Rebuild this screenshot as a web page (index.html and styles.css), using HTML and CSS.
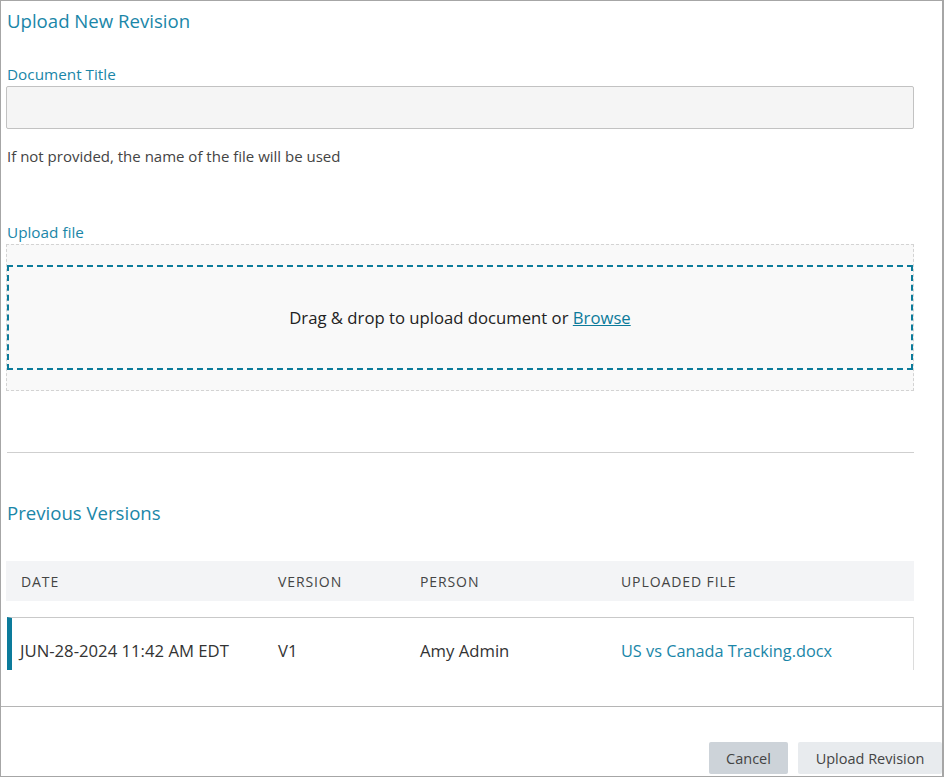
FILE: index.html
```html
<!DOCTYPE html>
<html>
    <head>
        <title>Upload New Revision</title>
        <link rel="stylesheet" href="styles.css">
    </head>
    <body>
        <div class="dialog">
            <div class="content">
                <h2 class="title">Upload New Revision</h2>
                <label class="label" for="doc-title">Document Title</label>
                <input class="text-input" id="doc-title" type="text">
                <p class="hint">If not provided, the name of the file will be used</p>

                <p class="label upload-label">Upload file</p>
                <div class="dropzone">
                    <div class="drop-inner">
                        Drag &amp; drop to upload document or&nbsp;<a href="#" class="browse">Browse</a>
                    </div>
                </div>

                <hr class="divider">

                <h2 class="title versions-title">Previous Versions</h2>
                <div class="table">
                    <div class="row head">
                        <div class="col c-date">DATE</div>
                        <div class="col c-ver">VERSION</div>
                        <div class="col c-person">PERSON</div>
                        <div class="col c-file">UPLOADED FILE</div>
                    </div>
                    <div class="row item">
                        <div class="col c-date">JUN-28-2024 11:42 AM EDT</div>
                        <div class="col c-ver">V1</div>
                        <div class="col c-person">Amy Admin</div>
                        <div class="col c-file"><a href="#" class="file-link">US vs Canada Tracking.docx</a></div>
                    </div>
                </div>
            </div>
            <div class="footer">
                <button class="btn cancel">Cancel</button>
                <button class="btn submit">Upload Revision</button>
            </div>
        </div>
    </body>
</html>
```

FILE: styles.css
```css
*{
    box-sizing: border-box;
}
body{
    margin: 0;
    font-family: "Open Sans", "Noto Sans", sans-serif;
    color: #333;
    background: #fff;
}
.dialog{
    width: 944px;
    height: 777px;
    border: 1px solid #a6a6a6;
    border-right-width: 2px;
    display: flex;
    flex-direction: column;
}
.content{
    height: 706px;
    padding: 7px 28px 0 5px;
    border-bottom: 1px solid #b5b5b5;
}
.title{
    margin: 0;
    font-size: 18.6px;
    font-weight: normal;
    color: #1a86a8;
    padding-left: 1px;
    line-height: 26px;
}
.label{
    display: block;
    margin: 30px 0 0 1px;
    font-size: 15.3px;
    color: #1a86a8;
    line-height: 20px;
}
.text-input{
    display: block;
    width: 100%;
    height: 43px;
    margin-top: 2px;
    background: #f5f5f5;
    border: 1px solid #c2c2c2;
    border-radius: 2px;
}
.hint{
    margin: 17px 0 0 1px;
    font-size: 15px;
    color: #444;
    line-height: 20px;
}
.upload-label{
    margin-top: 56px;
    margin-bottom: 0;
}
.dropzone{
    margin-top: 2px;
    height: 147px;
    border: 1px dashed #d3d3d3;
    background: #f9f9f9;
    padding-top: 20px;
}
.drop-inner{
    height: 105px;
    border: 2px dashed #0c7b9b;
    display: flex;
    justify-content: center;
    align-items: center;
    font-size: 16.7px;
    color: #222;
}
.browse{
    color: #0c7b9b;
}
.divider{
    margin: 61px 0 0 1px;
    border: 0;
    border-top: 1px solid #cfcfcf;
}
.versions-title{
    margin-top: 47px;
}
.table{
    margin-top: 35px;
    height: 109px;
    overflow: hidden;
}
.row{
    display: flex;
    align-items: center;
}
.head{
    height: 40px;
    background: #f3f4f6;
    font-size: 14px;
    letter-spacing: 0.9px;
    color: #444;
}
.item{
    margin-top: 16px;
    height: 66px;
    border-top: 1px solid #c9c9c9;
    border-right: 1px solid #dcdcdc;
    border-left: 5px solid #0c7b9b;
    margin-left: 1px;
    font-size: 16.7px;
    color: #333;
}
.col{
    padding-left: 15px;
}
.c-date{ width: 257px; }
.c-ver{ width: 142px; }
.c-person{ width: 201px; }
.item .c-date{ width: 251px; padding-left: 8px; }
.item .c-file{ font-size: 16.3px; }
.file-link{
    color: #1a86a8;
    text-decoration: none;
}
.footer{
    flex: 1;
    display: flex;
    justify-content: flex-end;
    align-items: flex-end;
    gap: 10px;
    padding-bottom: 2px;
}
.btn{
    height: 32px;
    border: 0;
    border-radius: 2px;
    font-family: "Open Sans", "Noto Sans", sans-serif;
    font-size: 14.5px;
    color: #444;
    padding: 0 10px;
}
.cancel{
    width: 79px;
    background: #cdd3d9;
}
.submit{
    width: 144px;
    background: #e8ebee;
}
```
